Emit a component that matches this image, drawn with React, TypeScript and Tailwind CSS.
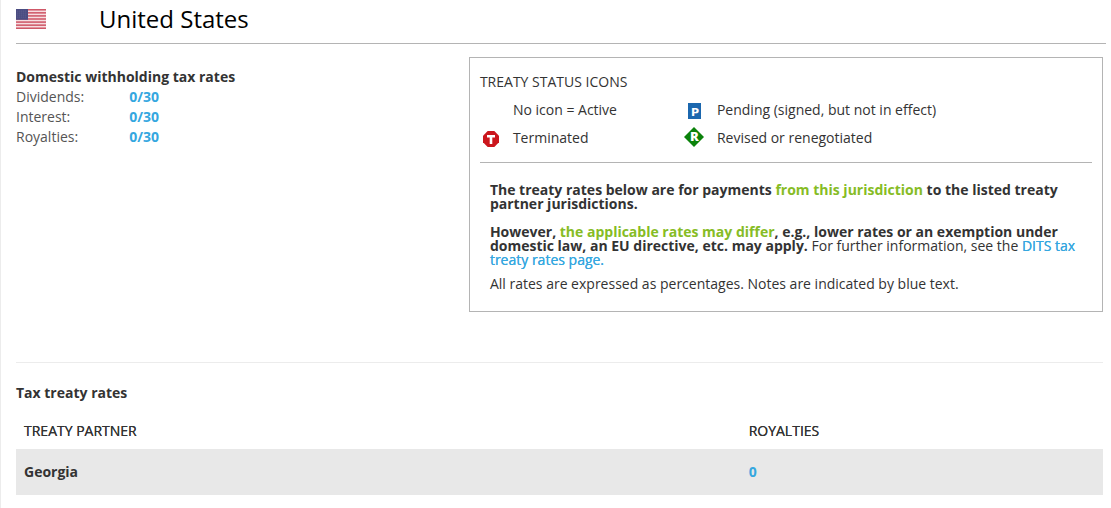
const domesticRates = [
  { label: 'Dividends', rate: '0/30' },
  { label: 'Interest', rate: '0/30' },
  { label: 'Royalties', rate: '0/30' },
];

const treatyRates = [{ partner: 'Georgia', royalties: '0' }];

const STRIPES = [0, 1, 2, 3, 4, 5, 6];
const STAR_ROWS = [2, 4, 6, 8];
const STAR_COLS = [1, 3, 5, 7, 9];

const UsFlag = () => (
  <svg viewBox="0 0 30 20" className="h-5 w-[30px] shrink-0" role="img" aria-label="Flag of the United States">
    <rect width="30" height="20" fill="#f6dde0" />
    {STRIPES.map((i) => (
      <rect key={i} y={(i * 40) / 13} width="30" height={20 / 13} fill="#cf5868" />
    ))}
    <rect width="12" height="10.8" fill="#4b4d82" />
    {STAR_ROWS.map((y) =>
      STAR_COLS.map((x) => <circle key={`${x}-${y}`} cx={x + 0.8} cy={y} r="0.35" fill="#9496b8" />)
    )}
  </svg>
);

const TerminatedIcon = () => (
  <svg viewBox="0 0 16 16" className="size-4" aria-hidden="true">
    <path d="M4.7 0h6.6L16 4.7v6.6L11.3 16H4.7L0 11.3V4.7z" fill="#cb161d" />
    <path d="M4 4h8v2.4H9.3V13H6.7V6.4H4z" fill="#fff" />
  </svg>
);

const PendingIcon = () => (
  <svg viewBox="0 0 13 16" className="h-4 w-[13px]" aria-hidden="true">
    <rect width="13" height="16" fill="#1b67ae" />
    <text x="7" y="12.5" textAnchor="middle" fontFamily="DejaVu Sans, sans-serif" fontSize="11" fontWeight="700" fill="#fff">
      P
    </text>
  </svg>
);

const RevisedIcon = () => (
  <svg viewBox="0 0 20 20" className="size-5" aria-hidden="true">
    <path d="M10 0l10 10-10 10L0 10z" fill="#0b820b" />
    <text x="10.3" y="14" textAnchor="middle" fontSize="13" fontWeight="800" fill="#fff">
      R
    </text>
  </svg>
);

const StatusLegend = () => (
  <div className="border-b border-[#b4b4b4] pb-[10px]">
    <h2 className="leading-7">TREATY STATUS ICONS</h2>
    <ul className="grid grid-cols-3 leading-7">
      <li className="flex items-center">
        <span className="w-[33px]" />
        No icon = Active
      </li>
      <li className="col-span-2 flex items-center">
        <span className="flex w-[33px] items-center pt-[2px] pl-1">
          <PendingIcon />
        </span>
        Pending (signed, but not in effect)
      </li>
      <li className="flex items-center">
        <span className="flex w-[33px] items-center pt-[2px] pl-[3px]">
          <TerminatedIcon />
        </span>
        Terminated
      </li>
      <li className="col-span-2 flex items-center">
        <span className="flex w-[33px] items-center pb-[2px]">
          <RevisedIcon />
        </span>
        Revised or renegotiated
      </li>
    </ul>
  </div>
);

const TreatyNotes = () => (
  <div className="px-[10px] py-5 leading-[14px]">
    <p className="mb-[14px] font-bold">
      The treaty rates below are for payments <span className="text-[#86bc25]">from this jurisdiction</span> to
      the listed treaty partner jurisdictions.
    </p>
    <p className="mb-[10px]">
      <strong className="font-bold">
        However, <span className="text-[#86bc25]">the applicable rates may differ</span>, e.g., lower rates or an
        exemption under domestic law, an EU directive, etc. may apply.
      </strong>{' '}
      For further information, see the{' '}
      <a href="#treaty-rates" className="text-[#35a7df] [text-shadow:0_0_0_currentColor]">
        DITS tax treaty rates page.
      </a>
    </p>
    <p>All rates are expressed as percentages. Notes are indicated by blue text.</p>
  </div>
);

export default function App() {
  return (
    <div className="border-l border-[#ececec] bg-white pr-2 pb-[13px] pl-[15px] font-['Open_Sans',sans-serif] text-sm text-[#333]">
      <header className="-mr-[3px] flex items-center gap-[53px] border-b border-[#b4b4b4] pb-[5px]">
        <UsFlag />
        <h1 className="text-2xl leading-[38px] text-black">United States</h1>
      </header>

      <div className="mt-[13px] grid grid-cols-12">
        <section className="col-span-5 pt-[10px] leading-5">
          <h2 className="font-bold">Domestic withholding tax rates</h2>
          <dl className="grid grid-cols-4">
            {domesticRates.map(({ label, rate }) => (
              <div key={label} className="col-span-4 grid grid-cols-subgrid">
                <dt className="text-[#555]">{label}:</dt>
                <dd className="col-span-3 font-bold text-[#35a7df]">{rate}</dd>
              </div>
            ))}
          </dl>
        </section>

        <section className="col-span-7 border border-[#b4b4b4] px-[10px] pt-[10px]">
          <StatusLegend />
          <TreatyNotes />
        </section>
      </div>

      <section className="mt-[50px] border-t border-[#ececec] pt-5">
        <h2 className="leading-5 font-bold">Tax treaty rates</h2>
        <table className="mt-[10px] w-full table-fixed text-left">
          <thead>
            <tr className="h-9 [text-shadow:0_0_0_currentColor]">
              <th className="w-2/3 px-2 font-normal">TREATY PARTNER</th>
              <th className="px-2 font-normal">ROYALTIES</th>
            </tr>
          </thead>
          <tbody>
            {treatyRates.map(({ partner, royalties }) => (
              <tr key={partner} className="h-[46px] bg-[#e8e8e8] font-bold">
                <td className="px-2">{partner}</td>
                <td className="px-2 text-[#35a7df]">{royalties}</td>
              </tr>
            ))}
          </tbody>
        </table>
      </section>
    </div>
  );
}
